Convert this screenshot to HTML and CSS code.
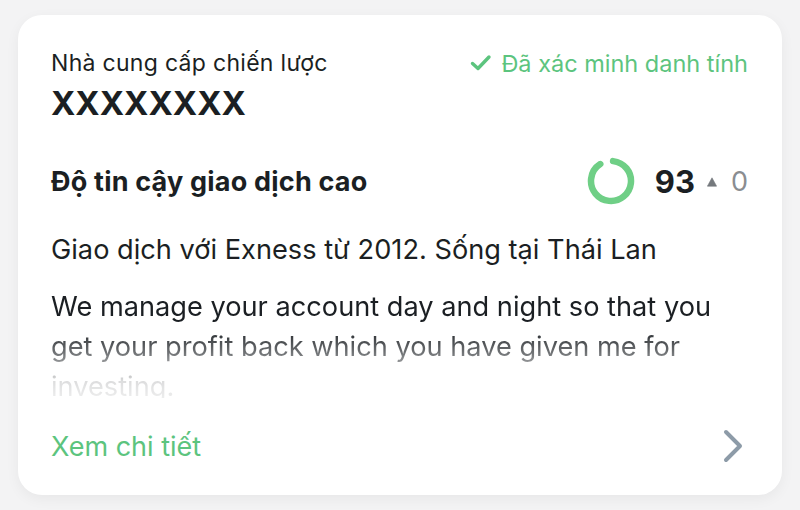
FILE: index.html
```html
<!DOCTYPE html>
<html lang="vi">
<head>
<meta charset="utf-8">
<link rel="stylesheet" href="styles.css">
</head>
<body>
<div class="card">
  <div class="head">
    <div class="label">Nhà cung cấp chiến lược</div>
    <div class="verified">
      <svg class="check" width="22" height="18" viewBox="0 0 22 18"><path d="M2.5 9.5 L8 14.5 L19 3" fill="none" stroke="#5cc47e" stroke-width="3.4" stroke-linecap="round" stroke-linejoin="round"/></svg>
      <span>Đã xác minh danh tính</span>
    </div>
  </div>
  <div class="name">XXXXXXXX</div>
  <div class="trust">
    <div class="trust-title">Độ tin cậy giao dịch cao</div>
    <div class="score">
      <svg class="ring" width="48" height="48" viewBox="0 0 48 48"><circle cx="24" cy="24" r="20" fill="none" stroke="#6fcf86" stroke-width="6.5" stroke-linecap="round" stroke-dasharray="111.5 125.66" transform="rotate(-84 24 24)"/></svg>
      <span class="num">93</span>
      <svg class="tri" width="10" height="10" viewBox="0 0 10 10"><path d="M5 0.8 L9.6 9.2 L0.4 9.2 Z" fill="#75797d" stroke="#75797d" stroke-width="0.6" stroke-linejoin="round"/></svg>
      <span class="delta">0</span>
    </div>
  </div>
  <div class="since">Giao dịch với Exness từ 2012. Sống tại Thái Lan</div>
  <div class="desc">We manage your account day and night so that you get your profit back which you have given me for investing.</div>
  <div class="more">
    <span class="link">Xem chi tiết</span>
    <svg class="chev" width="22" height="34" viewBox="0 0 22 34"><path d="M3 3 L17 17 L3 31" fill="none" stroke="#8d9ba8" stroke-width="4" stroke-linecap="round" stroke-linejoin="round"/></svg>
  </div>
</div>
</body>
</html>
```
FILE: styles.css
```css
html, body {
  margin: 0;
  padding: 0;
  background: #f3f3f4;
}
body {
  font-family: Inter, "Noto Sans", sans-serif;
  color: #1b1f23;
  padding: 15px 18px;
  width: 764px;
}
.card {
  background: #fff;
  border-radius: 24px;
  box-shadow: 0 4px 14px rgba(0,0,0,0.05);
  padding: 32px 34px 32px 33px;
  height: 480px;
  box-sizing: border-box;
  display: flex;
  flex-direction: column;
}
.head {
  display: flex;
  justify-content: space-between;
  align-items: center;
  height: 32px;
}
.label {
  font-size: 23px;
  letter-spacing: 0.3px;
}
.verified {
  display: flex;
  align-items: center;
  gap: 9px;
  color: #5cc47e;
  font-size: 23.5px;
}
.check { display: block; }
.name {
  font-size: 33px;
  font-weight: 700;
  line-height: 40px;
  margin-top: 4px;
}
.trust {
  display: flex;
  justify-content: space-between;
  align-items: center;
  margin-top: 33px;
  height: 50px;
}
.trust-title {
  font-size: 27px;
  font-weight: 700;
  letter-spacing: 0.2px;
}
.score {
  display: flex;
  align-items: center;
}
.ring { display: block; margin-right: 20px; }
.num {
  font-size: 31px;
  font-weight: 700;
}
.tri {
  display: block;
  margin-left: 12px;
  margin-top: 2px;
}
.delta {
  font-size: 27px;
  color: #8a8d91;
  margin-left: 14px;
}
.since {
  font-size: 27.2px;
  margin-top: 27px;
  line-height: 34px;
}
.desc {
  font-size: 27.2px;
  line-height: 40px;
  margin-top: 20px;
  height: 111px;
  overflow: hidden;
  -webkit-mask-image: linear-gradient(to bottom, #000 0%, #000 36%, rgba(0,0,0,0.65) 58%, rgba(0,0,0,0.15) 85%, rgba(0,0,0,0.08) 100%);
  mask-image: linear-gradient(to bottom, #000 0%, #000 36%, rgba(0,0,0,0.65) 58%, rgba(0,0,0,0.15) 85%, rgba(0,0,0,0.08) 100%);
}
.more {
  margin-top: auto;
  display: flex;
  justify-content: space-between;
  align-items: center;
  height: 34px;
}
.link {
  color: #5cc47e;
  font-size: 27px;
}
.chev { display: block; margin-right: 3px; }
```
